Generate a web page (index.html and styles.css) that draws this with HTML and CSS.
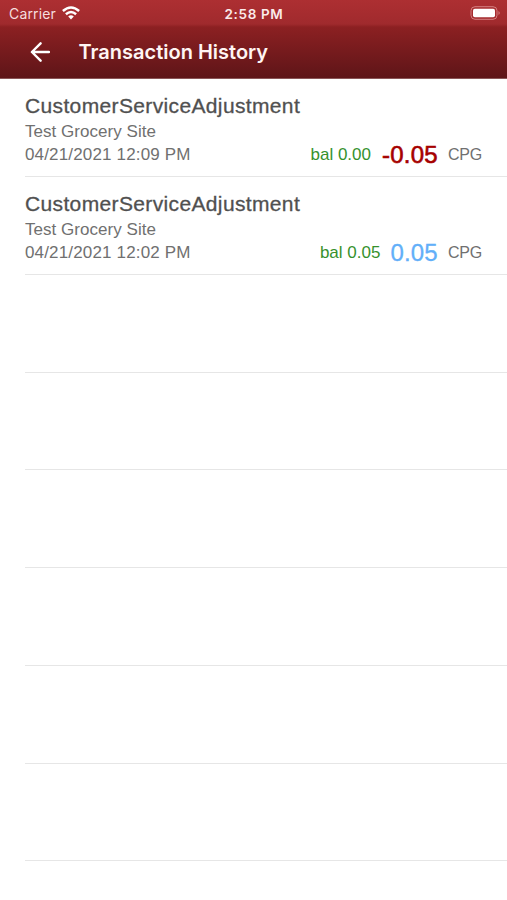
FILE: index.html
```html
<!DOCTYPE html>
<html lang="en">
<head>
<meta charset="utf-8">
<title>Transaction History</title>
<link rel="stylesheet" href="styles.css">
</head>
<body>
<header class="header">
  <div class="status">
    <div class="carrier"><span class="carrier-name">Carrier</span>
      <svg class="wifi" viewBox="0 0 18 14" width="18" height="14"><g fill="none" stroke="#fff" stroke-width="2.5"><path d="M.9 5Q9 -2 17.1 5"/><path d="M3.9 8.2Q9 3.8 14.1 8.2"/></g><path fill="#fff" d="M6.2 10.4Q9 8.2 11.8 10.4L9 13.4Z"/></svg>
    </div>
    <time class="clock">2:58 PM</time>
    <svg class="battery" viewBox="0 0 31 14" width="31" height="14"><rect x="1" y=".7" width="26" height="12.6" rx="4" fill="none" stroke="#d47f80"/><rect x="3" y="2.7" width="22" height="8.6" rx="1.8" fill="#fff"/><path d="M28.5 5Q31 7 28.5 9Z" fill="#d47f80"/></svg>
  </div>
  <div class="nav">
    <svg class="back" viewBox="0 0 20 20" width="20" height="20"><path d="M19 10H2M10.6 1.3L1.9 10L10.6 18.7" fill="none" stroke="#fff" stroke-width="2.4" stroke-linecap="round" stroke-linejoin="round"/></svg>
    <h1 class="title">Transaction History</h1>
  </div>
</header>
<main class="list">
  <article class="row">
    <h2 class="name"><span>CustomerServiceAdjustment</span></h2>
    <p class="site"><span>Test Grocery Site</span></p>
    <div class="details"><time class="date">04/21/2021 12:09 PM</time><span class="balance">bal 0.00</span><strong class="amount debit">-0.05</strong><span class="unit">CPG</span></div>
  </article>
  <article class="row">
    <h2 class="name"><span>CustomerServiceAdjustment</span></h2>
    <p class="site"><span>Test Grocery Site</span></p>
    <div class="details"><time class="date">04/21/2021 12:02 PM</time><span class="balance">bal 0.05</span><strong class="amount credit">0.05</strong><span class="unit">CPG</span></div>
  </article>
  <div class="row"></div><div class="row"></div><div class="row"></div><div class="row"></div><div class="row"></div><div class="row"></div>
</main>
</body>
</html>
```
FILE: styles.css
```css
* { box-sizing: border-box; }
body { margin: 0; height: 900px; overflow: hidden; background: #fff; color: #707070; font-family: "Liberation Sans", Arial, sans-serif; }
h1, h2, p { margin: 0; }
.header { height: 79px; background: linear-gradient(#ad2f32 0, #a02a2d 24px, #8c2022 27px, #5e1518 100%); border-bottom: 1px solid #8b5557; color: #fff; }
.status { height: 27px; display: grid; grid-template-columns: 1fr auto 1fr; align-items: center; padding: 0 6px 0 9px; }
.carrier { display: flex; align-items: center; gap: 6px; font: 400 14px Inter, sans-serif; color: #f6dede; }
.carrier-name { width: 47px; letter-spacing: .15px; }
.wifi { position: relative; top: -1px; }
.clock { font: 600 13.5px Inter, sans-serif; letter-spacing: .65px; margin-right: 2px; color: #fbeaea; }
.battery { justify-self: end; position: relative; top: -.5px; }
.nav { height: 50px; display: flex; align-items: center; padding-left: 30px; gap: 28.5px; }
.title { font: 600 20px Inter, sans-serif; letter-spacing: 0; color: #fff5f3; }
.list { padding: .4px 0 0 25px; }
.row { height: 97.75px; border-bottom: 1px solid #e6e6e6; padding: 14.6px 25px 0 0; }
.name { height: 26px; line-height: 24px; font-size: 21px; font-weight: 400; letter-spacing: .36px; color: #505050; -webkit-text-stroke: .3px #505050; }
.site { height: 23px; line-height: 23px; font-size: 17px; letter-spacing: .04px; }
.details { display: flex; align-items: center; height: 24px; font-size: 17px; white-space: nowrap; }
.date { letter-spacing: .16px; }
.balance { margin-left: auto; color: #36912d; }
.amount { margin: 0 10px; font-size: 24px; font-weight: 400; }
.debit { color: #a60000; margin-left: 11px; letter-spacing: .25px; -webkit-text-stroke: .6px #a60000; }
.credit { color: #62aff9; letter-spacing: .2px; -webkit-text-stroke: .3px #62aff9; }
.unit { font-size: 16px; letter-spacing: -.2px; }
```
